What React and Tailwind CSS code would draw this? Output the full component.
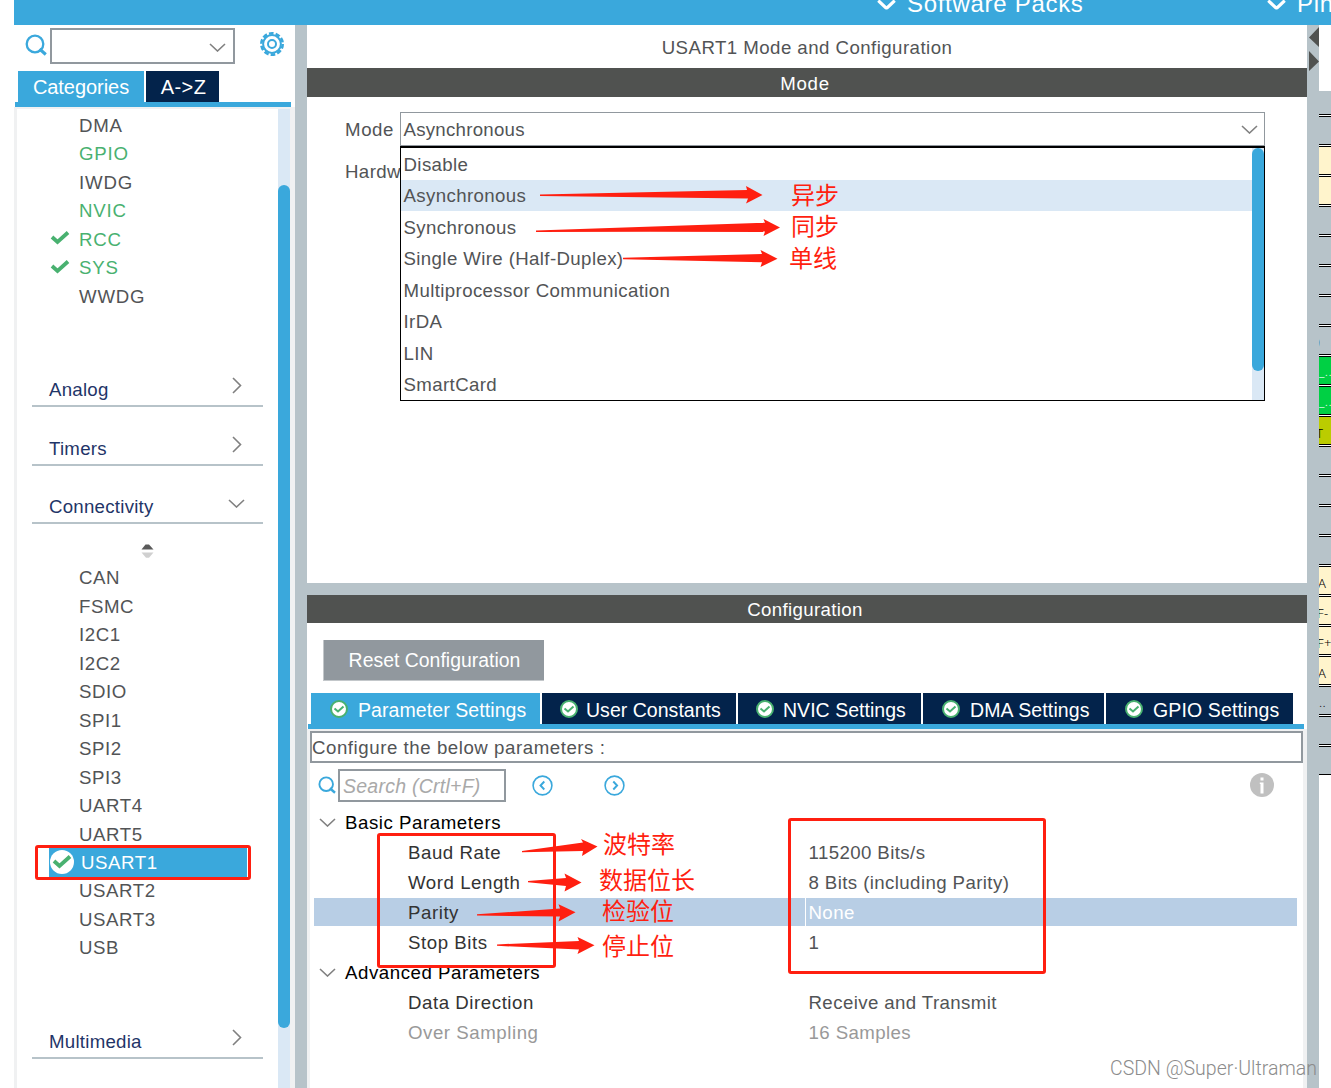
import React from 'react';

const cjk = "font-['Noto_Sans_CJK_SC',sans-serif]";

const systemItems = [
  { name: 'DMA' },
  { name: 'GPIO', on: true },
  { name: 'IWDG' },
  { name: 'NVIC', on: true },
  { name: 'RCC', on: true, check: true },
  { name: 'SYS', on: true, check: true },
  { name: 'WWDG' },
];

const connectivityItems = [
  'CAN', 'FSMC', 'I2C1', 'I2C2', 'SDIO', 'SPI1', 'SPI2', 'SPI3',
  'UART4', 'UART5', 'USART1', 'USART2', 'USART3', 'USB',
];

const modes = [
  'Disable',
  'Asynchronous',
  'Synchronous',
  'Single Wire (Half-Duplex)',
  'Multiprocessor Communication',
  'IrDA',
  'LIN',
  'SmartCard',
];

const tabs = [
  { label: 'Parameter Settings', cls: 'w-[229px] bg-[#3aa8dc] pl-[18px] gap-[9px] tracking-[0.08px]' },
  { label: 'User Constants', cls: 'w-[194px] bg-[#03234b] pl-[17px] gap-[7px] tracking-[0.03px]' },
  { label: 'NVIC Settings', cls: 'w-[183px] bg-[#03234b] pl-[17px] gap-[8px] tracking-[0.03px]' },
  { label: 'DMA Settings', cls: 'w-[181px] bg-[#03234b] pl-[18px] gap-[9px] tracking-[0.13px]' },
  { label: 'GPIO Settings', cls: 'w-[187px] bg-[#03234b] pl-[18px] gap-[9px] tracking-[0.13px]' },
];

const params = [
  { group: 'Basic Parameters' },
  { name: 'Baud Rate', value: '115200 Bits/s' },
  { name: 'Word Length', value: '8 Bits (including Parity)' },
  { name: 'Parity', value: 'None', selected: true },
  { name: 'Stop Bits', value: '1' },
  { group: 'Advanced Parameters' },
  { name: 'Data Direction', value: 'Receive and Transmit' },
  { name: 'Over Sampling', value: '16 Samples', disabled: true },
];

// pin rows of the chip view, top to bottom
const pins = [
  { bg: 'bg-[#b7c3c9]' },
  { bg: 'bg-[#fff4cc]' },
  { bg: 'bg-[#fff4cc]' },
  { bg: 'bg-[#b7c3c9]' },
  { bg: 'bg-[#b7c3c9]' },
  { bg: 'bg-[#b7c3c9]' },
  { bg: 'bg-[#b7c3c9]' },
  { bg: 'bg-[#b7c3c9]', text: ')', cls: '-ml-[3px] pt-[4px]' },
  { bg: 'bg-[#00d044]', text: '_..', cls: 'text-white pt-[4px]' },
  { bg: 'bg-[#00d044]', text: '_..', cls: 'text-white pt-[4px]' },
  { bg: 'bg-[#bbcc00]', text: 'T', cls: '-ml-[3px] pt-[6px]' },
  { bg: 'bg-[#b7c3c9]' },
  { bg: 'bg-[#b7c3c9]' },
  { bg: 'bg-[#b7c3c9]' },
  { bg: 'bg-[#b7c3c9]' },
  { bg: 'bg-[#fff4cc]', text: 'A', cls: '-ml-[1px] pt-[6px]' },
  { bg: 'bg-[#fff4cc]', text: 'F-', cls: '-ml-[2px] pt-[6px]' },
  { bg: 'bg-[#fff4cc]', text: 'F+', cls: '-ml-[2px] pt-[6px]' },
  { bg: 'bg-[#fff4cc]', text: 'A', cls: '-ml-[1px] pt-[6px]' },
  { bg: 'bg-[#b7c3c9]', text: '..', cls: 'pt-[5px]' },
  { bg: 'bg-[#b7c3c9]' },
  { bg: 'bg-[#b7c3c9]' },
];

const arrows = [
  '540,194.5 747,190 746,186 762.5,195 746,203.5 748,198.5 540,196',
  '536,230.5 765,222.7 763.5,219 780,227.5 763.5,236 765,231.5 536,232',
  '623,257.8 762,254 760.5,250 777.5,258.7 760.5,267 762,262.3 623,259.3',
  '522,851 583,842.5 581,839 597.5,846.5 582,856 583,851 522,852.3',
  '528,881 566,878 564.5,873.5 581.5,882.5 564.5,891.5 566,886 528,882.2',
  '477,914.3 560,908.5 558.5,904.3 575.5,912.3 558.5,921.5 560,916.5 477,915.6',
  '497,944.4 579,941 577.5,937 594.5,945.3 577.5,954 579,949.5 497,945.8',
];

const notes = [
  { text: '异步', cls: 'left-[791px] top-[178px]' },
  { text: '同步', cls: 'left-[791px] top-[209px]' },
  { text: '单线', cls: 'left-[789px] top-[241px]' },
  { text: '波特率', cls: 'left-[603px] top-[827px]' },
  { text: '数据位长', cls: 'left-[599px] top-[863px]' },
  { text: '检验位', cls: 'left-[602px] top-[894px]' },
  { text: '停止位', cls: 'left-[602px] top-[929px]' },
];

function Chevron({ dir = 'down', className = '', color = '#808080', strokeWidth = 1.6 }) {
  const d = dir === 'down' ? 'M1 1 L8.5 8 L16 1' : 'M1 1 L8.5 8.5 L1 16';
  const size = dir === 'down' ? [17, 9] : [10, 17];
  return (
    <svg width={size[0]} height={size[1]} viewBox={`0 0 ${size[0]} ${size[1]}`} className={`shrink-0 ${className}`}>
      <path d={d} fill="none" stroke={color} strokeWidth={strokeWidth} />
    </svg>
  );
}

function SearchIcon({ size, className = '' }) {
  return (
    <svg width={size} height={size} viewBox="0 0 22 22" className={`shrink-0 ${className}`}>
      <circle cx="10" cy="10" r="8.3" fill="none" stroke="#3aa8dc" strokeWidth="2.3" />
      <path d="M14.5 15 L20.8 20.5" stroke="#3aa8dc" strokeWidth="3" />
    </svg>
  );
}

function GearIcon() {
  return (
    <svg width="26" height="26" viewBox="0 0 26 26" fill="none" stroke="#3aa8dc">
      <circle cx="13" cy="13" r="10.7" strokeWidth="2.6" strokeDasharray="4.6 2.123" />
      <circle cx="13" cy="13" r="8.9" strokeWidth="2" />
      <circle cx="13" cy="13" r="4" strokeWidth="2" />
    </svg>
  );
}

function Check({ className = '' }) {
  return (
    <svg width="20" height="16" viewBox="0 0 20 16" className={className}>
      <path d="M2 7 L7.5 12 L18 2.5" fill="none" stroke="#49b170" strokeWidth="3.8" />
    </svg>
  );
}

function TabCheck() {
  return (
    <svg width="20" height="20" viewBox="0 0 20 20" className="shrink-0 -mt-[4px]">
      <circle cx="10" cy="10" r="8" fill="#fff" stroke="#49b170" strokeWidth="2" />
      <path d="M5.5 9.5 L9 12.5 L14.5 7.5" fill="none" stroke="#49b170" strokeWidth="2" />
    </svg>
  );
}

function NavButton({ dir }) {
  return (
    <svg width="22" height="22" viewBox="0 0 22 22" fill="none" stroke="#3aa8dc">
      <circle cx="10.5" cy="11.5" r="9.4" strokeWidth="1.6" />
      <path d={dir === 'prev' ? 'M12.3 7.5 L8.5 11.5 L12.3 15.5' : 'M9.3 7.5 L13.1 11.5 L9.3 15.5'} strokeWidth="1.9" />
    </svg>
  );
}

function Section({ title, open }) {
  return (
    <div className="flex h-[58.5px] w-[231px] ml-[15px] items-end justify-between border-b-2 border-[#b7c3c9] pl-[17px] text-[#1f3568] tracking-[0.25px]">
      <span className="leading-[20px] mb-[5px]">{title}</span>
      {open
        ? <Chevron className="mb-[14px] mr-[18px]" />
        : <Chevron dir="right" className="mb-[11px] mr-[21px]" />}
    </div>
  );
}

function Sidebar() {
  return (
    <div className="flex w-[281px] shrink-0 flex-col">
      <div className="flex h-[46px] items-start">
        <SearchIcon size={22} className="ml-[11px] mt-[9px]" />
        <div className="ml-[3px] mt-[3px] flex h-[36px] w-[185px] items-center justify-end border-2 border-[#91989e]">
          <Chevron className="mr-[7px] mt-[3px]" />
        </div>
        <div className="ml-[24px] mt-[6px]"><GearIcon /></div>
      </div>
      <div className="ml-[4px] flex h-[31px] gap-[2px] text-[20px] text-white">
        <div className="flex w-[126px] items-center justify-center bg-[#3aa8dc] pt-px tracking-[-0.05px]">Categories</div>
        <div className="flex w-[73px] items-center justify-center bg-[#03234b] pl-[2px] pt-px">A-&gt;Z</div>
      </div>
      <div className="ml-[1px] h-[5px] w-[276px] shrink-0 bg-[#3aa8dc]" />
      <div className="flex min-h-0 flex-1 border-x-[3px] border-t-2 border-[#f0f1f2] border-r-[5px]">
        <div className="w-[261px] overflow-hidden pt-[1.75px]">
          {systemItems.map((item) => (
            <div
              key={item.name}
              className={`flex h-[28.5px] items-center pt-px tracking-[0.8px] ${item.on ? 'text-[#49b170]' : 'text-[#525456]'}`}
            >
              <div className="w-[62px] pl-[33px]">{item.check && <Check className="-mt-[3px]" />}</div>
              {item.name}
            </div>
          ))}
          <div className="h-[38.25px]" />
          <Section title="Analog" />
          <Section title="Timers" />
          <Section title="Connectivity" open />
          <div className="h-[39.75px] pl-[124px] pt-[19px]">
            <svg width="13" height="16" viewBox="0 0 13 16">
              <path d="M0.5 6.5 L4.5 1.5 H8 L12.5 6.5 Z" fill="#5a5a5a" />
              <path d="M0.5 9.5 H12.5 L8 14.8 H5 Z" fill="#d0d0d0" />
            </svg>
          </div>
          {connectivityItems.map((name) => (
            <div key={name} className="flex h-[28.46px] items-center tracking-[0.55px] text-[#525456]">
              {name === 'USART1' ? (
                <div className="ml-[32px] flex h-[29px] w-[198px] items-center bg-[#3aa8dc] text-white">
                  <div className="-mt-px ml-[1px] mr-[7px] flex size-[24px] items-center justify-center rounded-full bg-white">
                    <Check />
                  </div>
                  <span className="pt-px">{name}</span>
                </div>
              ) : (
                <span className="ml-[62px] pt-px">{name}</span>
              )}
            </div>
          ))}
          <div className="h-[38.3px]" />
          <Section title="Multimedia" />
        </div>
        <div className="w-[12px] bg-[#dae8f5] pt-[76px]">
          <div className="h-[843px] rounded-full bg-[#3aa8dc]" />
        </div>
      </div>
    </div>
  );
}

function ModePanel() {
  return (
    <div className="h-[486px] pl-[38px] pt-[15px] text-[#525456]">
      <div className="flex h-[34px] items-center">
        <span className="w-[55px] pt-px tracking-[0.6px]">Mode</span>
        <div className="flex h-[34px] w-[865px] items-center justify-between border border-[#91989e] pl-[2.5px] pr-[6px] tracking-[0.25px]">
          <span className="pt-px">Asynchronous</span>
          <Chevron />
        </div>
      </div>
      <div className="flex">
        <div className="w-[55px] shrink-0 whitespace-nowrap pt-[12px]">Hardw</div>
        <div className="flex h-[255px] w-[865px] border border-t-2 border-black bg-white">
          <div className="-mt-px flex-1 pt-px">
            {modes.map((m) => (
              <div
                key={m}
                className={`flex h-[31.5px] items-center pl-[2.5px] pt-[1.5px] tracking-[0.38px] ${m === 'Asynchronous' ? 'bg-[#dae8f5]' : ''}`}
              >
                {m}
              </div>
            ))}
          </div>
          <div className="w-[12px] bg-[#dae8f5]">
            <div className="h-[223px] rounded-full bg-[#3aa8dc]" />
          </div>
        </div>
      </div>
    </div>
  );
}

function ParamRow({ row }) {
  if (row.group) {
    return (
      <div className="flex h-[30px] items-center pl-[5px] text-black">
        <Chevron className="mr-[9px]" />
        <span className="pt-[1.5px]">{row.group}</span>
      </div>
    );
  }
  const nameColor = row.disabled ? 'text-[#999]' : 'text-[#333]';
  const valueColor = row.disabled ? 'text-[#999]' : row.selected ? 'text-white' : 'text-[#525456]';
  const bg = row.selected ? 'bg-[#b8cee5]' : '';
  return (
    <div className="flex h-[30px] items-center">
      <div className={`flex h-[28px] w-[491px] items-center pl-[94px] pt-[2px] ${bg} ${nameColor}`}>{row.name}</div>
      <div className={`ml-px flex h-[28px] w-[491px] items-center pl-[2.5px] pt-[2px] tracking-[0.4px] ${bg} ${valueColor}`}>{row.value}</div>
    </div>
  );
}

function ConfigPanel() {
  return (
    <div className="flex min-h-0 flex-1 flex-col">
      <div className="ml-[16px] mt-[17px] flex h-[41px] w-[221px] shrink-0 items-center justify-center border-b border-l border-[#c3c7ca] bg-[#91989e] pl-px pt-px text-[19.4px] tracking-[0.02px] text-white">
        Reset Configuration
      </div>
      <div className="ml-[4px] mt-[12px] flex h-[31px] shrink-0 gap-[2px] text-[19.5px] text-white">
        {tabs.map((tab) => (
          <div key={tab.label} className={`flex items-center whitespace-nowrap pt-[4px] ${tab.cls}`}>
            <TabCheck />
            {tab.label}
          </div>
        ))}
      </div>
      <div className="ml-px h-[5px] w-[996px] shrink-0 bg-[#3aa8dc]" />
      <div className="flex-1 border-l-[3px] border-r-[4px] border-t-2 border-[#f0f1f2] tracking-[0.55px]">
        <div className="flex h-[32px] items-center border-2 border-[#91989e] pt-[2px] text-[#525456]">Configure the below parameters :</div>
        <div className="flex h-[44px] items-center">
          <SearchIcon size={18} className="ml-[8px]" />
          <div className="ml-[2px] flex h-[33px] w-[168px] items-center border-2 border-[#91989e] pl-[3px] pt-[3px] text-[19.5px] italic tracking-[0.25px] text-[#a9a9a9]">
            Search (Crtl+F)
          </div>
          <div className="ml-[26px] flex gap-[50px]">
            <NavButton dir="prev" />
            <NavButton dir="next" />
          </div>
          <svg width="24" height="24" viewBox="0 0 24 24" className="ml-[624px]">
            <circle cx="12" cy="12" r="12" fill="#c0c0c0" />
            <path d="M10.5 4.5 H13.5 V7.5 H10.5 Z M9.8 9.5 H13.5 V20.5 H10.5 V11 H9.8 Z" fill="#fff" />
          </svg>
        </div>
        <div className="ml-[4px]">
          {params.map((row) => <ParamRow key={row.group || row.name} row={row} />)}
        </div>
      </div>
    </div>
  );
}

function PinStrip() {
  return (
    <div className="w-[12px] shrink-0 overflow-hidden pt-[66px]">
      <div className="h-[23px] bg-[#b7c3c9]" />
      {pins.map((pin, i) => (
        <div key={i} className="h-[30px] overflow-hidden">
          <div className="h-px bg-black" />
          <div className="h-px bg-white" />
          <div className="h-px bg-black" />
          <div className={`h-[27px] whitespace-nowrap font-['Noto_Sans',sans-serif] text-[13px] font-light leading-[20px] text-black ${pin.bg}`}>
            <div className={pin.cls}>{pin.text}</div>
          </div>
        </div>
      ))}
      <div className="h-px bg-black" />
    </div>
  );
}

// hand-drawn marks on top of the window
function Annotations() {
  return (
    <div className="pointer-events-none absolute inset-0 text-[#ff1f10]">
      <svg width="1331" height="1088" viewBox="0 0 1331 1088" className="absolute inset-0">
        {arrows.map((points) => <polygon key={points} points={points} fill="#ff1f10" />)}
      </svg>
      <div className="absolute left-[35px] top-[845px] h-[35px] w-[216px] rounded-[3px] border-3 border-[#ff1f10]" />
      <div className="absolute left-[377px] top-[833px] h-[135px] w-[179px] rounded-[3px] border-3 border-[#ff1f10]" />
      <div className="absolute left-[788px] top-[818px] h-[156px] w-[258px] rounded-[3px] border-3 border-[#ff1f10]" />
      {notes.map((n) => (
        <div key={n.text} className={`absolute whitespace-nowrap text-[24px] leading-[32px] tracking-normal ${cjk} ${n.cls}`}>{n.text}</div>
      ))}
      <div className="absolute left-[1110px] top-[1056px] whitespace-nowrap font-['Roboto',sans-serif] text-[19.5px] font-light leading-[26px] tracking-[0.02px] text-[#8c8c8c]">
        CSDN @Super·Ultraman
      </div>
    </div>
  );
}

export default function App() {
  return (
    <div className="relative flex h-[1088px] w-[1331px] flex-col overflow-hidden bg-white font-['Liberation_Sans',Arial,sans-serif] text-[18.67px] tracking-[0.4px]">
      <div className="ml-[14px] flex h-[25px] shrink-0 overflow-hidden bg-[#3aa8dc] text-[24px] text-white">
        <div className="-mt-[12px] ml-[864px] flex h-[32px] w-[390px] shrink-0 items-center gap-[13px] whitespace-nowrap tracking-[0.7px]">
          <Chevron color="#fff" strokeWidth={3} className="-mr-px scale-110" />
          <span>Software Packs</span>
        </div>
        <div className="-mt-[12px] flex h-[32px] shrink-0 items-center gap-[13px] whitespace-nowrap tracking-[0.7px]">
          <Chevron color="#fff" strokeWidth={3} className="-mr-px scale-110" />
          <span>Pinout</span>
        </div>
      </div>
      <div className="ml-[14px] flex min-h-0 flex-1">
        <Sidebar />
        <div className="w-[12px] shrink-0 bg-[#b7c3c9]" />
        <div className="flex w-[1000px] shrink-0 flex-col">
          <div className="flex h-[43px] shrink-0 items-center justify-center pt-[2px] text-[#525456] tracking-[0.45px]">USART1 Mode and Configuration</div>
          <div className="flex h-[29px] shrink-0 items-center justify-center bg-[#505250] pr-[4px] pt-[3px] tracking-[0.7px] text-white">Mode</div>
          <ModePanel />
          <div className="h-[12px] shrink-0 bg-[#b7c3c9]" />
          <div className="flex h-[28px] shrink-0 items-center justify-center bg-[#505250] pr-[4px] pt-[2px] tracking-[0.35px] text-white">Configuration</div>
          <ConfigPanel />
        </div>
        <div className="w-[12px] shrink-0 bg-[#b7c3c9]">
          <svg width="12" height="48" viewBox="0 0 12 48">
            <path d="M12 2 V22 L2 12.5 Z M2 26 V46 L12 36.5 Z" fill="#505250" />
          </svg>
        </div>
        <PinStrip />
      </div>
      <Annotations />
    </div>
  );
}
